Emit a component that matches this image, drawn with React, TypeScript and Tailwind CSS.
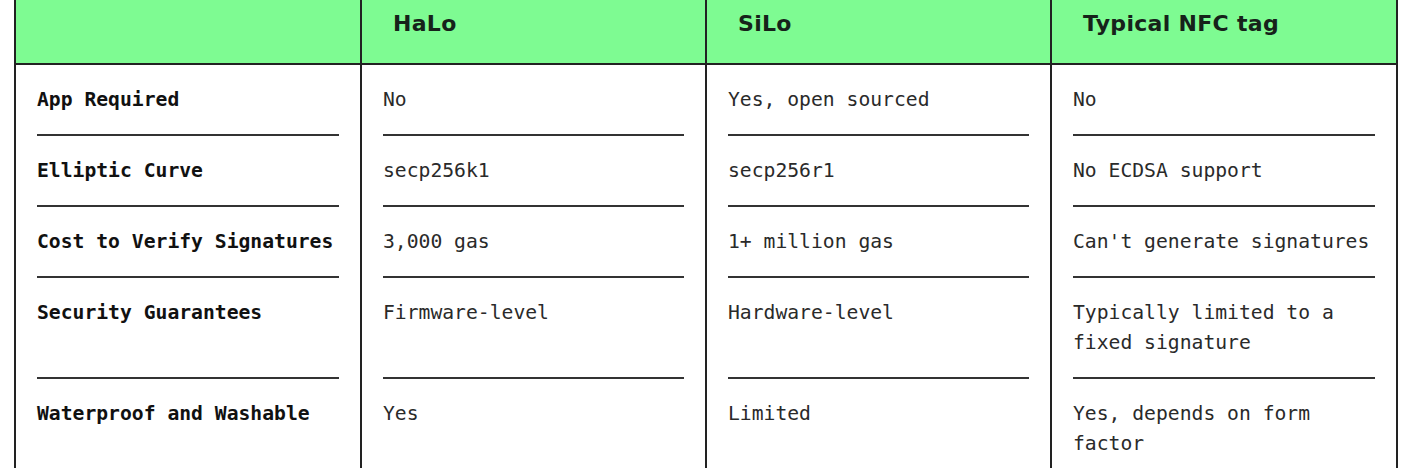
import React from "react";

const headers = ["", "HaLo", "SiLo", "Typical NFC tag"];

const rows: string[][] = [
  ["App Required", "No", "Yes, open sourced", "No"],
  ["Elliptic Curve", "secp256k1", "secp256r1", "No ECDSA support"],
  ["Cost to Verify Signatures", "3,000 gas", "1+ million gas", "Can't generate signatures"],
  ["Security Guarantees", "Firmware-level", "Hardware-level", "Typically limited to a fixed signature"],
  ["Waterproof and Washable", "Yes", "Limited", "Yes, depends on form factor"],
];

export default function App() {
  return (
    <div className="h-[468px] w-[1406px] overflow-hidden bg-white">
      <div className="ml-[14px] w-[1384px]">
        <div className="grid grid-cols-[346px_345px_345px_348px] bg-[#7efb92] border-b-2 border-[#222]">
          {headers.map((h, i) => (
            <div
              key={i}
              className={`h-[63px] pl-[31px] pt-[10px] border-l-2 border-[#222] ${i === 3 ? "border-r-2" : ""}`}
            >
              <span className="text-[22px] leading-[28px] tracking-[0.3px] font-bold text-[#16221a] [font-family:'DejaVu_Sans',sans-serif]">
                {h}
              </span>
            </div>
          ))}
        </div>
        <div className="grid grid-cols-[346px_345px_345px_348px]">
          {rows.map((r, ri) =>
            r.map((c, ci) => (
              <div
                key={`${ri}-${ci}`}
                className={`px-[21px] border-l-2 border-[#222] ${ci === 3 ? "border-r-2" : ""}`}
              >
                <div
                  className={`h-full pt-[20px] pb-[19px] text-[19.7px] leading-[30px] [font-family:'DejaVu_Sans_Mono',monospace] ${
                    ri < rows.length - 1 ? "border-b-2 border-[#333]" : ""
                  } ${ci === 0 ? "font-bold text-[#111]" : "text-[#2a2a2a]"}`}
                >
                  {c}
                </div>
              </div>
            ))
          )}
        </div>
      </div>
    </div>
  );
}
